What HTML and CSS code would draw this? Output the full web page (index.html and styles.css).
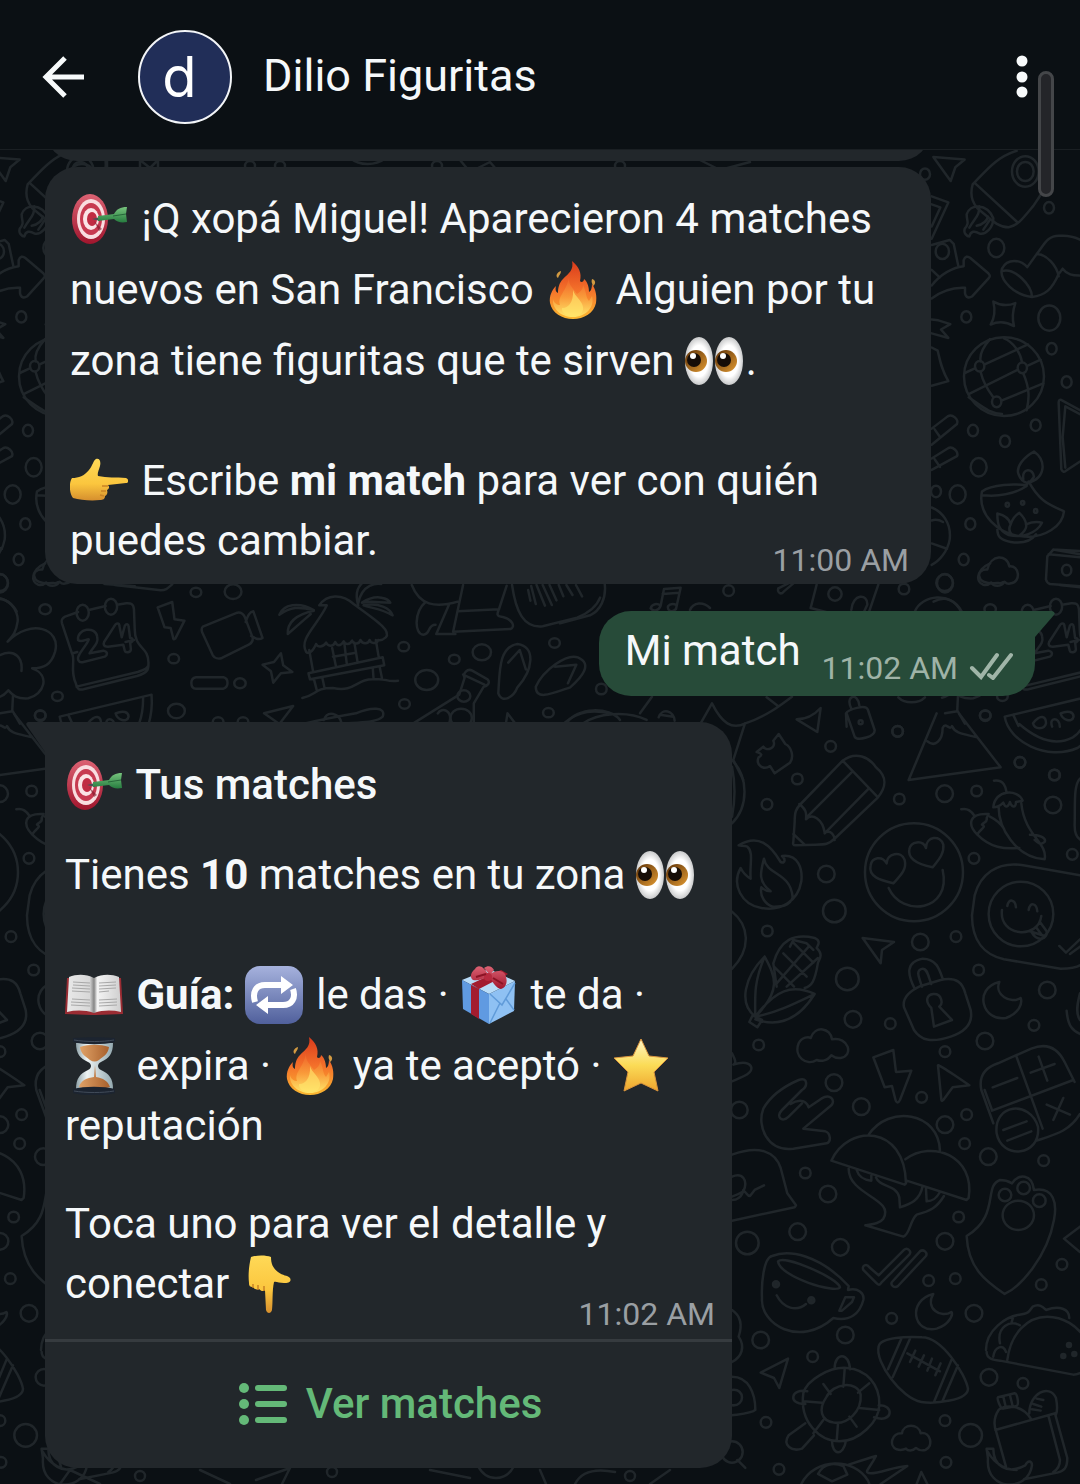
FILE: index.html
```html
<!DOCTYPE html>
<html lang="es">
<head>
    <meta charset="UTF-8">
    <meta name="viewport" content="width=device-width, initial-scale=1.0">
    <title>Dilio Figuritas</title>
    <link rel="stylesheet" href="styles.css">
</head>
<body>
    <!-- emoji shapes -->
    <svg class="defs" aria-hidden="true">
        <defs>
            <linearGradient id="gRed" x1="0" y1="0" x2="0" y2="1"><stop offset="0" stop-color="#dc6273"/><stop offset="1" stop-color="#a0152d"/></linearGradient>
            <linearGradient id="gGreen" x1="0" y1="0" x2="0" y2="1"><stop offset="0" stop-color="#77c47d"/><stop offset="1" stop-color="#277d40"/></linearGradient>
            <linearGradient id="gFire" x1="0" y1="0" x2="0" y2="1"><stop offset="0" stop-color="#d93a1c"/><stop offset=".5" stop-color="#f4712a"/><stop offset="1" stop-color="#fbb831"/></linearGradient>
            <linearGradient id="gFlame" x1="0" y1="0" x2="0" y2="1"><stop offset="0" stop-color="#ee5f28"/><stop offset=".5" stop-color="#f99a3a"/><stop offset="1" stop-color="#ffe76a"/></linearGradient>
            <linearGradient id="gHand" x1="0" y1="0" x2="0" y2="1"><stop offset="0" stop-color="#ffd957"/><stop offset=".6" stop-color="#fbc63e"/><stop offset="1" stop-color="#d68f2e"/></linearGradient>
            <radialGradient id="gEye"><stop offset=".65" stop-color="#fff"/><stop offset="1" stop-color="#c9cacb"/></radialGradient>
            <linearGradient id="gIris" x1="0" y1="0" x2="1" y2="1"><stop offset="0" stop-color="#5b3007"/><stop offset="1" stop-color="#e29a32"/></linearGradient>
            <linearGradient id="gPage" x1="0" y1="0" x2="1" y2="0"><stop offset="0" stop-color="#e8e8e8"/><stop offset=".42" stop-color="#d8d8d8"/><stop offset=".5" stop-color="#858585"/><stop offset=".56" stop-color="#f4f4f4"/><stop offset="1" stop-color="#cfcfcf"/></linearGradient>
            <linearGradient id="gBlue" x1="0" y1="0" x2="0" y2="1"><stop offset="0" stop-color="#a6b2dd"/><stop offset="1" stop-color="#50609c"/></linearGradient>
            <linearGradient id="gStar" x1="0" y1="0" x2="0" y2="1"><stop offset="0" stop-color="#fff5c6"/><stop offset=".5" stop-color="#fbdc57"/><stop offset="1" stop-color="#eea52e"/></linearGradient>
            <linearGradient id="gGlass" x1="0" y1="0" x2="1" y2="0"><stop offset="0" stop-color="#8fa2a8"/><stop offset=".3" stop-color="#eef4f4"/><stop offset="1" stop-color="#94a9b0"/></linearGradient>
            <linearGradient id="gSand" x1="0" y1="0" x2="1" y2="0"><stop offset="0" stop-color="#e0a267"/><stop offset="1" stop-color="#a8602c"/></linearGradient>
        </defs>
        <symbol id="target" viewBox="0 0 58 58">
            <ellipse cx="20" cy="29" rx="18" ry="25" fill="url(#gRed)"/>
            <ellipse cx="21" cy="29" rx="14" ry="20" fill="#f9dde0"/>
            <ellipse cx="21" cy="29" rx="11" ry="16" fill="#c73a50"/>
            <ellipse cx="21" cy="29" rx="8" ry="11" fill="#fbe4e6"/>
            <ellipse cx="22" cy="29" rx="5" ry="7" fill="#c02c43"/>
            <path d="M24 31l8 8-3 2z" fill="#7a1828" opacity=".6"/>
            <path d="M22 29l8-2v4z" fill="#4b5257"/>
            <path d="M28 26l16-2c3-5 6-7 13-7l-1 7 1 8c-6 1-10 0-13-3l-16 2z" fill="url(#gGreen)"/>
            <path d="M43 26l13-2" stroke="#26663a" stroke-width="1"/>
        </symbol>
        <symbol id="fire" viewBox="0 0 58 58">
            <path d="M17 10c-4 1-6 5-3 7 1-3 3-4 3-7zM48 18c4 1 4 5 1 7-1-3-2-4-1-7z" fill="#d29a42"/>
            <path d="M28 0c7 6 10 12 8 20 1 2 4 1 4-2 4 3 5 9 5 13 2-1 3-4 3-8 4 6 5 12 4 19-2 10-12 16-23 16S8 52 6 42c-1-7 2-13 6-17-1 4 0 6 2 7 0-5 1-10 5-14 6-6 11-9 9-18z" fill="url(#gFire)"/>
            <path d="M25 16c-1 8 4 11 8 17 4-3 6-5 6-9 4 8 2 11 6 16 1-2 2-3 3-5 3 11-6 21-19 21-12 0-21-8-20-18 1 4 4 6 7 6-3-9 7-14 9-28z" fill="url(#gFlame)"/>
            <path d="M29 29c2 7 9 10 10 17 1 6-4 9-10 9s-12-3-11-8c4 1 12-4 11-18z" fill="#ffe56c" opacity=".65"/>
        </symbol>
        <symbol id="eyes" viewBox="0 0 58 58">
            <ellipse cx="14" cy="29" rx="14" ry="24" fill="url(#gEye)"/>
            <ellipse cx="44" cy="29" rx="14" ry="24" fill="url(#gEye)"/>
            <circle cx="11" cy="29" r="11" fill="url(#gIris)"/>
            <circle cx="41" cy="29" r="11" fill="url(#gIris)"/>
            <circle cx="9" cy="28" r="7" fill="#160d08"/>
            <circle cx="39" cy="28" r="7" fill="#160d08"/>
            <circle cx="8" cy="24" r="3" fill="#fff"/>
            <circle cx="38" cy="24" r="3" fill="#fff"/>
        </symbol>
        <symbol id="point-right" viewBox="0 0 58 58">
            <path d="M2 26c7 0 12-2 17-8 4-5 4-9 7-11 4-1 5 3 4 7-1 4-3 7-2 10 9 2 18 1 28 2 3 1 3 5 0 5l-18 2c2 2 1 4-1 5 1 3 0 5-2 6 0 3-2 4-5 4-9 1-20 0-27-2-4-5-4-16-1-20z" fill="url(#gHand)"/>
            <path d="M38 34l-6 0M36 39l-5 0M34 44l-4-1" stroke="#c98325" stroke-width="1.5" fill="none"/>
        </symbol>
        <symbol id="point-down" viewBox="0 0 58 58">
            <path d="M11 2c6-2 15-2 20 0 0 7 2 11 7 15 5 4 9 3 12 6 2 4-2 5-6 5-5 0-8-2-10-1-2 9-1 20-2 28-1 4-5 4-6 0l-1-20c-2 2-4 1-6-1-3 1-5 0-6-2-3 0-4-1-4-4-1-9 0-17 2-26z" fill="url(#gHand)"/>
            <path d="M24 36l0-5M18 35v-5M13 33l0-4" stroke="#c98325" stroke-width="1.5" fill="none"/>
        </symbol>
        <symbol id="book" viewBox="0 0 58 58">
            <path d="M2 12h54l2 36-26 1H26L0 48z" fill="#9b2c33"/>
            <path d="M4 11c8-3 17-3 25 1 8-4 17-4 25-1l2 35c-9-2-18-2-27 1-9-3-18-3-27-1z" fill="url(#gPage)"/>
            <path d="M8 16l17 1M8 19l17 1M7 22l18 1M7 25l18 1M7 33l18 1M6 36l19 1M6 39l19 1M34 17l17-1M34 20l17-1M34 23l17-1M34 26l10-1M34 34l18-1M34 37l18-1M34 40l18-1" stroke="#a8a8a8" stroke-width="1"/>
        </symbol>
        <symbol id="repeat" viewBox="0 0 58 58">
            <rect width="58" height="58" rx="15" fill="url(#gBlue)"/>
            <path d="M10 36c-3-10 1-17 10-17h18M48 23c3 9-1 16-10 16H20" fill="none" stroke="#fff" stroke-width="6"/>
            <path d="M36 10l12 9-12 9zM23 30v18l-12-9z" fill="#fff"/>
        </symbol>
        <symbol id="gift" viewBox="0 0 58 58">
            <path d="M3 14l27-11 26 12-26 13z" fill="#b9dcf8"/>
            <path d="M3 14l27 14v30L4 43z" fill="#609ae1"/>
            <path d="M56 15L30 28v30l25-13z" fill="#8fc1f3"/>
            <path d="M12 19l8 4v30l-8-5zM12 18l30-14 7 4-29 15z" fill="#a31c2f"/>
            <path d="M31 28l12 11 13-22M31 57l10-20M47 33l8 11" fill="none" stroke="#609bd9" stroke-width="1.5"/>
            <path d="M30 10C25 0 19-2 16 3c-5 4-5 9-2 11 5 1 10-1 16-4zM30 9c7-6 16-5 17 2 2 6-1 11-5 12-5-1-9-7-12-14zM25 2c4-3 8-2 10 2l-4 5z" fill="url(#gRed)"/>
            <ellipse cx="29" cy="11" rx="4" ry="4" fill="#b72a3f"/>
            <path d="M17 11l10-3M34 12l10 6" stroke="#8b1325" stroke-width="2"/>
        </symbol>
        <symbol id="hourglass" viewBox="0 0 58 58">
            <path d="M11 6h37c0 11-4 15-12 19-4 2-4 6 0 8 8 4 12 8 12 19H11c0-11 4-15 12-19 4-2 4-6 0-8C15 21 11 17 11 6z" fill="url(#gGlass)"/>
            <path d="M15 10c9-3 20-3 29 0-1 7-5 9-10 13-3 2-6 2-9 0-5-4-9-6-10-13z" fill="url(#gSand)"/>
            <path d="M14 50c2-7 8-9 15-10l1-12 1 12c7 1 12 4 14 10-9 3-22 3-31 0z" fill="url(#gSand)"/>
            <path d="M8 1c12-1 31-1 42 0v4c-12 3-30 3-42 0zM8 52c12-3 30-3 42 0v4c-11 3-31 3-42 0z" fill="#1c2430"/>
            <path d="M9 3c12 2 29 2 40 0M9 54c12 2 29 2 40 0" stroke="#414b59" fill="none"/>
        </symbol>
        <symbol id="star" viewBox="0 0 58 58">
            <path d="M29 2l8 17 19 2-14 14 4 19-17-8-17 8 4-19L2 21l19-2z" fill="url(#gStar)" stroke="#d9943d" stroke-width="1" stroke-linejoin="round"/>
        </symbol>
    </svg>

    <header class="header">
        <button class="icon-button" aria-label="Volver">
            <svg width="44" height="44" viewBox="0 0 44 44" fill="none" stroke="#f7fafb" stroke-width="5">
                <path d="M23 3L4 22l19 19M4 22h38"/>
            </svg>
        </button>
        <div class="avatar">d</div>
        <h1>Dilio Figuritas</h1>
        <button class="icon-button menu" aria-label="Más opciones">
            <svg width="12" height="44" viewBox="0 0 12 44" fill="#f7fafb">
                <circle cx="6" cy="6" r="5.5"/><circle cx="6" cy="22" r="5.5"/><circle cx="6" cy="37" r="5.5"/>
            </svg>
        </button>
        <div class="scroll-thumb"></div>
    </header>

    <main class="chat">
        <svg class="wallpaper" viewBox="0 150 1080 1334" preserveAspectRatio="xMinYMin slice" aria-hidden="true">
            <g id="doodles">
                <!-- rocket, globe, lamp -->
                <g transform="translate(880 0) scale(.3333 .3827)">
                    <path d="M160 410l94 7-28 20-14 36z"/>
                    <path d="M410 394c-60 16-90 50-132 88-10 30 2 50 14 62 40 28 60 50 94 50 26-4 40-20 74-56 40-50 60-80 50-130M284 478l130 104"/>
                    <circle cx="436" cy="448" r="40"/><circle cx="436" cy="448" r="25"/>
                    <path d="M340 570c-20-40-70-38-80-10 0 20 10 20-6 38-4 12 8 20 14 20 4-14 16-16 30-8 20 4 42-16 42-40zM268 595c20-30 30-30 30-56M290 590c20-4 30-10 34-24M310 600l20-26"/>
                    <path d="M155 513l50 16-50 95M155 534l26 8-26 50M155 640l54-13 12 10 14 58M155 705l24 20"/>
                    <circle cx="187" cy="657" r="20"/>
                    <path d="M155 746c30-32 60-46 96-50v-16c4-10 12-12 20-6l54 40c6 6 6 8 0 14l-48 46c-10 6-20 4-22-8v-14c-40-2-70 8-100 28"/>
                    <path d="M470 664c20-20 30-50 70-48 30-2 60 8 80 20M470 664l-28 34c-20-20-60-24-76 4-10 30 40 70 90 74 40-4 60-20 80-60l12-14c14 16 30 18 50 18M366 708c40-10 90 40 90 68M470 664c30 0 60 30 66 58"/>
                    <path d="M340 788c20 10 44 12 66 4-8 20-10 40-4 60-20-10-44-14-70-4 14-20 14-38 8-60z"/>
                    <ellipse cx="372" cy="984" rx="120" ry="103"/>
                    <circle cx="299" cy="957" r="14"/><circle cx="427" cy="961" r="14"/><circle cx="350" cy="1050" r="14"/>
                    <path d="M330 886c-30 30-30 50-28 58M372 884c30 10 50 40 54 62M256 974l30-12M314 952l130-52M266 1030l148-64M442 956l40-16M302 972c8 30 24 50 38 66M430 976c20 40 18 66 10 96M366 1046l124-44M266 1038c50 30 60 40 100 44"/>
                    <path d="M155 835l20 2 36 10-28 14 22 22-50-12M155 908l18 8c8 30 12 50 32 80l-50 12"/>
                    <path d="M155 1120l48-32c14-8 34 8 28 20l-76 54M180 1142l-16-20M155 1198l48-26c14-8 34 8 28 20l-76 36M180 1220l-16-20"/>
                    <path d="M600 1072l-54-26c-6-4-10 0-10 6l8 174c4 8 10 8 14 4l42-24M600 1082l-44-20-8 80 8 80"/>
                    <path d="M462 1180c-30 14-56 40-46 60 6 14 16 20 26 22 20-4 44-14 46-42 0-20-10-30-26-40zM430 1252c-6-30 30-30 32-6l-14 16M306 1284c30-20 100-20 134-16l6-10c30 50 60 60 106 78-4 40-60 70-120 66-80-4-140-60-126-118zM306 1294c50 4 100-4 134-24M352 1382c0 20 10 30 40 34 30 4 60 0 76-20M352 1342c20 4 36 14 40 28 6-16 18-26 26-30 12 10 20 20 20 30 12-4 30-8 48-4-16 28-60 40-100 32-30-10-34-30-34-56zM392 1370c-6 10-6 20 6 28M438 1370c4 10-6 20-20 30"/>
                    <circle cx="382" cy="1319" r="5"/><circle cx="428" cy="1314" r="5"/><circle cx="467" cy="1335" r="5"/>
                    <path d="M155 1326c30 10 60 40 54 84-6 30-30 56-54 66M155 1360c14-4 26 0 34 4M155 1420l46 14"/>
                    <path d="M310 1528c-24-6-20-42 12-40 10-40 60-40 66-8 30-4 36 40 6 44-10 4-16 0-20-4-14 16-34 12-40 2-8 6-16 8-24 6z"/>
                    <path d="M600 1440l-80-4-18 18-4 60c2 8 6 10 12 12l90 6M520 1436l80 12M506 1448l94 8"/>
                    <circle cx="560" cy="1490" r="14"/><circle cx="135" cy="455" r="15"/><circle cx="507" cy="543" r="15"/><circle cx="349" cy="648" r="24"/><circle cx="259" cy="828" r="15"/><circle cx="508" cy="831" r="33"/><circle cx="515" cy="911" r="15"/><circle cx="560" cy="998" r="15"/><circle cx="467" cy="1111" r="15"/><circle cx="279" cy="1125" r="15"/><circle cx="375" cy="1153" r="15"/><circle cx="296" cy="1221" r="24"/><circle cx="233" cy="1292" r="24"/><circle cx="168" cy="1284" r="15"/><circle cx="271" cy="1369" r="15"/><circle cx="251" cy="1462" r="15"/><circle cx="195" cy="1524" r="24"/>
                </g>
                <!-- strip around the outgoing bubble -->
                <g transform="translate(560 580) scale(.3333)">
                    <path d="M272 85c4-14 20-16 30-8l10-50 50-4-14 64c-14 14-26 4-24-8 6-8 16-8 26-4M302 77c-6 14-20 20-30 8M308 42l50-4M0 130l90-24c30-14 50-50 44-96M655 25l40-20M655 25c-4 14 8 20 16 10l40-34M770 14l-18 70 60 16M955 14l-34 100M874 90c4-50 50-50 48-16l-14 30M1065 94c20-50 110-60 140 0M390 90c10-24 40-26 60-6"/>
                    <path d="M422 430l34-60c30 60 60 80 100 60 60-20 100-50 140-80M555 430l-35 110 30 60M620 352l34 26M860 440l-2-40c6-10 60-30 66-10l20 60c2 20-50 34-60 20l-24-70M874 386c-20-40 20-50 24-10"/>
                    <circle cx="902" cy="427" r="6"/>
                    <path d="M710 418c30 0 50-10 72-34l-10 72zM1015 352c20 20 60 20 80 0"/>
                    <path d="M20 430c30-50 130-50 160-10M70 430c40-30 130-40 190-10M296 412c10-30 46-20 48 10M300 404l40 6M240 400l36-50"/>
                    <circle cx="124" cy="327" r="16"/><circle cx="506" cy="32" r="16"/><circle cx="825" cy="42" r="20"/><circle cx="1032" cy="27" r="16"/><circle cx="1154" cy="8" r="25"/><circle cx="1013" cy="454" r="16"/><circle cx="1276" cy="407" r="16"/><circle cx="1380" cy="547" r="16"/><circle cx="1484" cy="585" r="16"/>
                </g>
                <!-- pencil, smiley, padlock -->
                <g transform="translate(720 720) scale(.3333)">
                    <path d="M110 96l20-16c10 16 40 4 30-18l16-20 20 30c20 10 26 40 14 56l-46 32-14-22c-20 14-44-4-34-26 14-8 8-10-6-16z"/>
                    <path d="M650-20l-84 200 276-38L718-18M622 64c24 20 46-4 46-40 10-20 20 10 28-6 10 24 36 24 76 34"/>
                    <path d="M368 122c40-30 80-10 100 20 36 30 30 60 6 90L346 354c-20 20-30 20-60 20l-60 2c-6 0-8-4-6-10l4-60c0-30 4-40 18-54zM368 122l106 110M394 158L262 290M446 206L314 340M238 252c20 16 22 26 20 46 20-20 50 0 56 40 20-10 30 10 30 22M220 342l34 32"/>
                    <path d="M56 376c60-36 96 0 126 50 16 6 14-10 4-18 50-6 62 40 58 76-10 60-60 90-120 80-60-10-90-70-62-120 6 12 16 24 30 32-4-40 10-80-10-96-10-4-20-2-26-4zM132 416c8 50 80 40 86 116-10 30-40 28-60 28-20-6-40-30-34-58 8 8 16 12 28 12-40-30-30-60-20-98z"/>
                    <circle cx="582" cy="457" r="147"/>
                    <path d="M520 490c-40-10-76-20-68-54 4-24 34-30 48-6 0-30 44-40 54-10 8 30-16 50-34 70zM638 442c-40-8-76-24-70-54 4-24 40-30 50-4 0-36 44-40 52-10 4 30-20 52-32 68zM506 504c40 90 190 70 162-54"/>
                    <path d="M822 182c30-4 36 20 38 36M820 262c4-54 74-56 88-20l-20 4c0 20-14 16-18 0-8 20-14 16-20 2-10 10-20 14-30 14M836 262c0 60 50 150 138 156 10-50-60-70-70-168M930 344c30 0 50 10 44 22-10 10-20 4-30-6M724 268c20-4 30 6 40 20M772 344c-30-30-26-66 34-62l-6 12c4 14-10 12-14 20 16 8-8 14-14 30zM810 290c20 10 34 24 42 36M772 344c40 40 80 44 126 40"/>
                    <path d="M1080 466l-170-30c-80-14-130 30-146 90l-8 60c0 80 40 120 96 132l170 28c30 0 50-4 58-10"/>
                    <circle cx="903" cy="582" r="97"/>
                    <path d="M862 558c4-24 24-20 26 4M926 570c4-26 24-20 26 4M846 570c-10 80 110 90 118 18M930 634l44 14M934 636c20 34 50 20 46-2l-20-28M950 624l16 22M1018 678l20 20 42-40M1050 702l30-22"/>
                    <path d="M134 710c-60 60-80 140-28 180 80-80 60-120 28-180zM134 710c-30 70-30 110-28 180M106 890c60-80 110-100 178-68-50 80-110 100-178 76M106 890c60-10 120-40 178-68M98 886l28 14-14 22-24-16zM160 730c20-70 60-90 124-76 20 10 10 20 6 30 20 20 10 30 4 44-10 60-20 70-40 76M170 790l96-110M200 800l94-86M162 740l60 60M190 700l70 70M220 668l60 60M210 680l10-20 40 10 20 20M160 730l10 70"/>
                    <path d="M428 654l94 12-36 24-4 40zM460 1012l60-22 8 66 46-4-34 88c-6 12-12 8-14-2l-10-40-22 4zM654 1036c2-4 94 60 94 60l-50 6-28 38c-4 4-6 4-6-2z"/>
                    <path d="M552 862c-6-30 20-50 50-64l60-18c50-10 66 10 74 40l16 50c10 50-30 70-60 80-60 20-90 10-110-20zM584 806c-20-40-30-80 24-90 40 0 50 30 60 60M606 800c-10-30-20-50 2-54 14 0 16 20 26 46M634 864c-20-20-14-40 6-42 26-2 30 30 18 38l38 40-54 20z"/>
                    <path d="M838 786c-80 20-50 120 20 108 40-14 50-44 44-60-30 20-80-10-64-48zM236 970c10-20 30-20 36-16 14-40 60-30 64 4 50-10 66 50 26 56-14 2-20-2-28-8-14 20-34 18-44 14-30 20-70-10-54-50z"/>
                    <path d="M36 1000c10 20 14 30 4 34 30-10 50-6 54 8 4 20-30 30-58 42"/>
                    <path d="M784 1110c-10-50 20-70 50-80l100-44c50-20 80 0 100 40l30 60M784 1110l36 100M888 1006l80 220M816 1172l244-92M932 1058l72-26M956 1010l26 72M818 1102l74-28M980 1154l70 30M1030 1134l-30 66"/>
                    <path d="M1080 176c-20 20-14 80-16 140 0 20 6 36 16 42M1040 872c4 50 20 60 40 70M1080 820c-8 30-14 60 0 80"/>
                    <circle cx="533" cy="34" r="16"/><circle cx="332" cy="79" r="16"/><circle cx="232" cy="177" r="16"/><circle cx="141" cy="253" r="16"/><circle cx="538" cy="237" r="16"/><circle cx="770" cy="213" r="16"/><circle cx="900" cy="127" r="16"/><circle cx="1003" cy="165" r="16"/><circle cx="762" cy="415" r="16"/><circle cx="1057" cy="403" r="16"/><circle cx="142" cy="633" r="16"/><circle cx="708" cy="650" r="16"/><circle cx="776" cy="750" r="16"/><circle cx="511" cy="911" r="16"/><circle cx="116" cy="975" r="16"/><circle cx="675" cy="995" r="16"/><circle cx="942" cy="916" r="16"/><circle cx="605" cy="1132" r="16"/><circle cx="740" cy="1184" r="16"/>
                    <circle cx="674" cy="221" r="25"/><circle cx="999" cy="255" r="25"/><circle cx="319" cy="462" r="25"/><circle cx="601" cy="666" r="25"/><circle cx="982" cy="810" r="25"/><circle cx="399" cy="898" r="25"/><circle cx="795" cy="963" r="25"/><circle cx="342" cy="1088" r="25"/><circle cx="424" cy="1160" r="25"/><circle cx="58" cy="1170" r="25"/><circle cx="343" cy="573" r="34"/><circle cx="382" cy="777" r="34"/>
                    <path d="M36 120c50 50 50 140 0 190M36 140c10 50 10 100 0 150M36 575c50 40 60 110 0 172"/>
                </g>
                <!-- mushrooms, cup, turtle -->
                <g transform="translate(720 1100) scale(.3333)">
                    <path d="M236-60c30-10 26 20 10 30l-60 60c-20 20 0 40 20 20l40-40M236-60c-46 20-86 50-106 86-20 50 10 130 90 120l100-16c16-6 10-32-4-36l-66-8 84-70c14-16-4-36-30-20l-38 26c-10-30-40-20-54-10"/>
                    <path d="M334 182c50-110 220-110 224 68l-4 4zM446 104c60-90 210-70 214 48M556 178c80-60 210-10 190 116l-6 6-180-58M386 206c0 80 140 90 104 150-10 14-30 16-54 20l114 34c20-6 20-50 40-66 40-10 60-20 82-56M410 210c6 20 20 30 44 32v-16M468 232c10 30 60 20 70 60l2 30c30-10 60-20 68-64M618 266l2 38c20 0 30-10 40-28"/>
                    <path d="M36 164c80-30 130-10 146 40l20 76 26 36-4 6-188 40M36 230c30-14 50 10 34 44 10 0 10 14 20 14l14-18 28-14M36 290c30-10 40-20 34-20M36 300c14 0 30-8 34-30"/>
                    <path d="M740 408c100-60 50-150 100-168 20 0 26 4 36 10 20-30 60-30 66 20 60-10 70 40 60 90-20 110-100 200-148 222-60-40-110-80-114-174z"/>
                    <circle cx="855" cy="285" r="19"/><circle cx="911" cy="264" r="19"/><circle cx="958" cy="302" r="19"/><ellipse cx="895" cy="346" rx="47" ry="44"/>
                    <path d="M156 468c50-20 140-6 230 90l-2 12c30-8 50 10 46 30-10 40-40 66-90 54-100 90-220 20-214-60-2-40 4-120 30-126zM174 484c20-20 180 50 186 78-10 20-180-30-186-78zM376 592h26l-6 14-30 26h-8zM170 586c20 40 60 50 88 26"/>
                    <circle class="solid" cx="168" cy="553" r="9"/><circle class="solid" cx="274" cy="601" r="9"/>
                    <path d="M430 510c-6-14 10-20 18-8l28 24 76-76c10-10 24 4 16 14l-84 84c-6 8-8 8-16 0zM516 546l84-92c10-8 24 4 18 14l-84 90c-10 8-24-2-18-12z"/>
                    <path d="M640 582c-80 20-60 120 10 104 40-12 50-44 44-50-30 20-80-10-54-54z"/>
                    <path d="M476 740c4-30 90-30 130-28 60 0 130 110 138 154 0 36-100 46-140 40-60-10-140-120-128-166zM544 716l-40 92M572 712l-54 120M696 776l-54 130M714 796l-46 106M562 760l98 54M586 752l-16 34M612 766l-16 34M636 776l-14 36M662 790l-16 36"/>
                    <path d="M798 750c0-60 60-100 100-106 30-4 30-10 40-24 20-10 30 0 40 10 40-14 70-4 70 24M800 756c0 20 20 24 40 26l220 42c10 0 20-4 30-10M862 780c10-80 60-130 120-130 50 0 90 30 110 60M880 650l-6 20M840 730c-10-50 30-70 60-54M820 770c4-30 30-40 38-14"/>
                    <circle class="solid" cx="1047" cy="735" r="6"/><circle class="solid" cx="1030" cy="768" r="6"/><circle class="solid" cx="1063" cy="762" r="6"/>
                    <path d="M250 880c10-40 80-80 130-76 60 4 100 50 98 110 0 50-60 110-120 110-60 0-120-60-108-144zM320 890c20-40 90-50 102-6 4 50-40 90-80 84-40-6-48-40-22-78zM310 852l22 30M374 808l-4 52M448 850l-34 28M478 930l-60-6M410 980l-22-30M350 1024l4-54M280 1000l30-40M250 904l56 4M344 806c0-50 44-50 46 2M262 874c-50-10-60 40-6 38M256 970l-50 36c-20 30 10 50 40 40l36-40M336 1022c0 44 34 48 42 0M462 952c60 20 60-40 14-36"/>
                    <path d="M204 776l-26 88-16-30-40-16zM530 1048c-24-10-16-50 16-48 4-30 50-30 56 0 30-6 40 40 14 50-14 4-20 0-28-6-10 10-24 10-30 2-8 4-14 6-28 2z"/>
                    <path d="M834 892l50-12c8 0 14 34 6 38l-40 8c-8 2-20-30-16-34zM850 890l8 34M870 886l8 32M836 930c-20 30-10 60-6 70l28 100M838 928c20-14 70-14 96 30M826 990l180-50M928 940c0-60 60-90 80-46 4 20 4 40 0 50M950 896l20 4M940 912l24 8M936 928l26 4M986 950l34 130c0 20-10 30-20 36M1006 944l36 130c0 30-10 40-30 44l-100 20M800 1046h20c0 50 40 80 96 50 10-20 20-10 20 0-10 80-140 80-132-20zM800 1050c10 20 40 60 90 60"/>
                    <path d="M244 1152c40-80 160-80 200-10l4 10M294 1122c20-40 60-30 76-24l12 26-46 20zM386 1094c30-10 60-20 82-26-20 40-40 50-16 52 30 0 70-20 110-22l-80 54M590 1152l14-36 18 36"/>
                    <path d="M36 830c50 0 70 50 70 100-10 10-40 12-70 16M36 870c40-6 40 50 0 46M36 630c30 20 30 50 20 80 20 30 10 60-20 76M52 1080l24 24"/>
                    <circle cx="36" cy="1056" r="32"/>
                    <path d="M816 30l-22-60M830 100c-10-90 100-100 124-20 10 90-110 100-124 20M850 90l70-26M862 122l72-28M950 122c60-20 100-30 130-80M1080 380l-48 36 48 40"/>
                    <circle cx="256" cy="219" r="16"/><circle cx="734" cy="131" r="16"/><circle cx="971" cy="182" r="16"/><circle cx="716" cy="351" r="16"/><circle cx="1026" cy="493" r="16"/><circle cx="964" cy="554" r="16"/><circle cx="626" cy="542" r="16"/><circle cx="706" cy="536" r="16"/><circle cx="515" cy="655" r="16"/><circle cx="278" cy="770" r="16"/><circle cx="138" cy="967" r="16"/><circle cx="177" cy="1108" r="16"/><circle cx="675" cy="962" r="16"/><circle cx="678" cy="1087" r="16"/><circle cx="909" cy="850" r="16"/>
                    <circle cx="675" cy="74" r="25"/><circle cx="805" cy="170" r="25"/><circle cx="324" cy="282" r="25"/><circle cx="233" cy="395" r="25"/><circle cx="361" cy="442" r="25"/><circle cx="675" cy="424" r="25"/><circle cx="762" cy="640" r="25"/><circle cx="376" cy="705" r="25"/><circle cx="122" cy="720" r="25"/><circle cx="807" cy="832" r="25"/><circle cx="82" cy="429" r="34"/><circle cx="752" cy="1006" r="34"/>
                </g>
            </g>
            <use href="#doodles" x="-945"/>
            <!-- tree, calendar, beach hut, watermelon -->
            <g id="strip" transform="translate(0 560) scale(.3827 .3333)">
                <path d="M-30 125c50-30 80 30 76 60-4 30-10 40-26 60 60-70 140-40 124 30-10 40-30 50-60 50 50 20 30 80-10 90-30 2-40-8-52-24-12 16-20 20-30 22M0 285c40-20 60 10 56 48M34 405l-2 46 20 40M0 460l32-6"/>
                <path d="M204 156l-34 14c-10 6-10 12-8 20l26 90c10 20-6 50 10 90 4 20 10 20 20 18l140-40c30-10 30-20 30-40 0-50-36-40-36-100l-2-60c-2-20-10-18-20-18l-24 4M232 150l44-12M190 280l12-4M350 240l-22 6M200 380l160-44c20-8 24-10 28-20"/>
                <ellipse cx="216" cy="158" rx="16" ry="24"/><ellipse cx="290" cy="140" rx="16" ry="24"/>
                <path d="M204 240c-4-34 46-44 50-10 4 20-10 30-20 50l36-8c14 4 10 14 4 18l-56 16c-14 4-18-10-10-24 10-20 20-30 24-44-8 0-20 10-28 2zM298 200c6-14 14-10 14-2l6 34 8-34c4-8 10-6 10 2l4 34c8 0 10 10 0 14l2 20c0 10-14 12-16 4l-4-18-40 6c-12 0-12-8-10-14z"/>
                <path d="M412 142l38-16 6 52 26 4-24 54c-4 4-6 2-6-4l-6-28-16-2zM530 200l90-42c10-2 16 4 20 14l20 60c2 10-4 18-10 22l-70 40c-10 4-20 0-24-8l-28-70c-2-8 0-14 2-16zM642 186c6-20 10-30 20-32l24 80c-10 8-20 0-30-6"/>
                <path d="M734 280l6 36 24 20-30 4-20 28-6-34-22-20 30-8zM730 164c10-30 50-40 90-14-40-10-60-10-90 14zM820 152c-40 10-70 30-68 70 30-30 40-40 60-60M834 136c20-34 60-36 90-4 60 50 100 80 84 100-8 8-14 10-20 8-4 14-20 10-22 0-4 14-20 12-24 0-4 14-18 14-22 2-6 14-18 12-22 2-8 16-18 14-22 2-6 16-18 14-24 2-10 16-22 14-26 4-10 26-20 30-26 24-20-40 30-80 54-140zM806 340l194-48 4 24-194 42zM808 270l10 64M868 264l10 56M900 252l6 58M926 248l8 56M982 240l8 54M870 290l60-12M820 356l8 36M842 352l6 32M974 324l2 30M992 320l6 34M790 414c40-10 30-30 80-30 60 14 60-30 110-26 30-4 30 10 60 4M936 136c-10-40 0-60 20-76M936 130c10-60 50-60 60-58M946 128c40-30 70-10 74 0-30 0-50-6-74 0zM950 136c40-10 70 10 76 30-30-20-50-20-76-30z"/>
                <path d="M1076 75c20 60 60 70 120 50M1210 75l-26 140 150-8c14-6 4-30-20-36-20-2-14-12-10-24l20-70M1140 222h50M1140 222l34-90M1196 154l108-6M1112 126c-30 30-30 96-6 98 20 0 10-30 32-30M1338 75c10 80 30 130 80 124l90-26c30-14 50-30 60-60M1380 90l6 32M1388 78l12 54M1402 75l22 62M1418 75l24 60M1436 75l18 46M1460 75l12 34M1480 75l16 30M1505 75l16 34"/>
                <path d="M1302 400c4-60 0-140 50-148 50 8 40 80 0 130-10 30-40 50-50 18zM1328 308l30-38 16 58M1400 380c20-50 80-100 110-88 40 20 10 60-20 90-50 20-90 40-90-2zM1450 320l56-6-22 56M1080 490l120-86 14-50c-6-14 8-30 20-22l40 26c8 10 0 20-10 22l-26 50v60M1210 344l56 30M1144 460c10-20 40-10 30 30"/>
                <circle cx="1212" cy="408" r="17"/><circle cx="1205" cy="474" r="28"/>
                <path d="M156 470l240-66c4 60-10 130-50 160-80 40-180-20-190-94zM178 464l14 34M374 412c0 50-10 100-40 120-50 30-100 0-140-40"/>
                <path d="M230 490c20-30 34-20 34 0-4 20-30 20-34 0zM302 460c20-10 34-4 34 10-4 20-30 10-34-10zM280 500c-10-30 20-30 20 0M690 460l76-22-36 54zM800 490c50-14 80-20 130-30 40-20 80-20 70 10-20 20-60 16-90 20M846 480c10-30 40-20 46 8M500 368c0-10 4-14 12-16h72c14 4 14 28 0 34h-72c-8 0-12-8-12-18zM1322 490l4-30 20 30M1474 490c40-40 80-40 120-30M300 75l120 16c14 0 18-6 30-18M118 10c-40 20-40 60 10 60 14-4 14 4 24-4"/>
                <circle cx="118" cy="148" r="15"/><circle cx="512" cy="97" r="14"/><circle cx="609" cy="95" r="22"/><circle cx="454" cy="296" r="14"/><circle cx="627" cy="370" r="15"/><circle cx="461" cy="453" r="22"/><circle cx="150" cy="409" r="14"/><circle cx="105" cy="466" r="14"/><circle cx="1055" cy="260" r="14"/><circle cx="1187" cy="298" r="14"/><circle cx="1259" cy="277" r="24"/><circle cx="1115" cy="360" r="30"/><circle cx="1057" cy="432" r="14"/><circle cx="1449" cy="249" r="14"/><circle cx="1433" cy="458" r="14"/><circle cx="570" cy="486" r="14"/><circle cx="635" cy="486" r="14"/>
            </g>
            <use href="#strip" x="945"/>
            <!-- slivers above the first bubble and under the last one -->
            <path d="M70 172a13 13 0 0 1 24 0M107 160v8M140 170v-10l10 8 8-8v10M350 158c10 8 25 8 36 0M460 160l10 12 20-10 12 14M700 160l20 10 30-8"/>
            <circle cx="250" cy="166" r="5"/><circle cx="280" cy="166" r="5"/><circle cx="437" cy="166" r="5"/><circle cx="620" cy="166" r="5"/>
            <path d="M60 1484l10-14 30 14M200 1470l30 14M256 1480l34-12-8 16M430 1470l40 8M478 1466c8 16 28 16 36 0M540 1470l6 14M575 1484c6-12 20-16 40-12M650 1484l20-14"/>
            <circle cx="332" cy="1472" r="5"/><circle cx="140" cy="1476" r="5"/><circle cx="630" cy="1476" r="5"/>
        </svg>

        <div class="bubble previous"></div>

        <article class="bubble wide">
            <p>
                <svg class="emoji" role="img" aria-label="diana"><use href="#target"/></svg> ¡Q xopá Miguel! Aparecieron 4 matches<br>
                nuevos en San Francisco <svg class="emoji tall" role="img" aria-label="fuego"><use href="#fire"/></svg> Alguien por tu<br>
                zona tiene figuritas que te sirven <svg class="emoji tall" role="img" aria-label="ojos"><use href="#eyes"/></svg>.
            </p>
            <p>
                <svg class="emoji" role="img" aria-label="mano a la derecha"><use href="#point-right"/></svg> Escribe <b>mi match</b> para ver con quién<br>
                puedes cambiar.
            </p>
            <time class="time">11:00 AM</time>
        </article>

        <article class="bubble outgoing">
            <p>Mi match</p>
            <time class="time">11:02 AM</time>
            <svg class="checks" width="44" height="28" viewBox="0 0 44 28" fill="none" stroke="#a0b5a8" stroke-width="4" stroke-linecap="round">
                <path d="M3 16l9 9L28 3M20 23l4 3L42 3"/>
            </svg>
            <svg class="tail" width="20" height="26" viewBox="0 0 20 26" aria-hidden="true"><path d="M0 0h17q4 1 2 4L0 26z" fill="#274b39"/></svg>
        </article>

        <article class="bubble list">
            <svg class="tail" width="20" height="30" viewBox="0 0 20 30" aria-hidden="true"><path d="M20 0H3Q0 1 2 4l18 26z" fill="#22272b"/></svg>
            <div class="list-text">
                <h2><svg class="emoji" role="img" aria-label="diana"><use href="#target"/></svg> Tus matches</h2>
                <p>Tienes <b>10</b> matches en tu zona <svg class="emoji" role="img" aria-label="ojos"><use href="#eyes"/></svg></p>
                <p class="guide">
                    <svg class="emoji" role="img" aria-label="libro"><use href="#book"/></svg> <b>Guía:</b> <svg class="emoji" role="img" aria-label="repetir"><use href="#repeat"/></svg> le das · <svg class="emoji" role="img" aria-label="regalo"><use href="#gift"/></svg> te da ·<br>
                    <svg class="emoji tall" role="img" aria-label="reloj de arena"><use href="#hourglass"/></svg> expira · <svg class="emoji" role="img" aria-label="fuego"><use href="#fire"/></svg> ya te aceptó · <svg class="emoji" role="img" aria-label="estrella"><use href="#star"/></svg><br>
                    reputación
                </p>
                <p class="hint">
                    Toca uno para ver el detalle y<br>
                    conectar <svg class="emoji" role="img" aria-label="mano hacia abajo"><use href="#point-down"/></svg>
                </p>
                <time class="time">11:02 AM</time>
            </div>
            <button class="list-button">
                <svg width="48" height="42" viewBox="0 0 48 42" fill="#64b978">
                    <circle cx="5" cy="5" r="5"/><circle cx="5" cy="21" r="5"/><circle cx="5" cy="37" r="5"/>
                    <rect x="16" y="2" width="32" height="6" rx="3"/><rect x="16" y="18" width="32" height="6" rx="3"/><rect x="16" y="34" width="32" height="6" rx="3"/>
                </svg>
                Ver matches
            </button>
        </article>
    </main>
</body>
</html>
```
FILE: styles.css
```css
* {
    box-sizing: border-box;
}
body {
    display: flex;
    flex-direction: column;
    min-height: 100vh;
    margin: 0;
    background-color: #0b1014;
    color: #f5f8fa;
    font-family: Roboto, "Liberation Sans", sans-serif;
    font-size: 42px;
    line-height: 60px;
}
h1, h2, p {
    margin: 0;
}
button {
    border: none;
    background: none;
    padding: 0;
    font: inherit;
    cursor: pointer;
}
.defs {
    position: absolute;
    width: 0;
    height: 0;
}

/* header */
.header {
    position: relative;
    z-index: 2;
    display: flex;
    align-items: center;
    height: 150px;
    padding: 4px 52px 0 42px;
    border-bottom: 1px solid #1a1f23;
}
.icon-button {
    display: flex;
}
.avatar {
    width: 94px;
    height: 94px;
    margin-left: 52px;
    padding-right: 11px;
    border: 2px solid #f3f5f8;
    border-radius: 50%;
    background-color: #212e58;
    color: #fff;
    font-family: Inter, sans-serif;
    font-size: 56px;
    line-height: 90px;
    text-align: center;
}
.header h1 {
    flex: 1;
    margin-left: 31px;
    padding-bottom: 2px;
    font-size: 45px;
    font-weight: 400;
}
.scroll-thumb {
    position: absolute;
    top: 71px;
    right: 26px;
    width: 16px;
    height: 126px;
    border: 3px solid #444649;
    border-radius: 8px;
    background-color: #242529;
}

/* conversation */
.chat {
    position: relative;
    flex: 1;
    display: flex;
    flex-direction: column;
    align-items: flex-start;
    padding: 0 45px 16px;
    overflow: hidden;
}
.wallpaper {
    position: absolute;
    top: 0;
    left: 0;
    width: 100%;
    height: 100%;
    fill: none;
    stroke: #20262a;
    stroke-width: 2.5;
    stroke-linecap: round;
    stroke-linejoin: round;
}
.wallpaper path,
.wallpaper circle,
.wallpaper ellipse {
    vector-effect: non-scaling-stroke;
}
.wallpaper .solid {
    fill: #20262a;
}
.bubble {
    position: relative;
    border-radius: 32px;
    background-color: #22272b;
}
.previous {
    width: 100%;
    max-width: 886px;
    height: 80px;
    margin: -69px 0 6px;
}
.wide {
    width: 100%;
    max-width: 886px;
    padding: 22px 22px 6px 25px;
}
.wide p + p {
    margin-top: 60px;
}
.emoji {
    width: 58px;
    height: 58px;
    margin-right: 3px;
    vertical-align: -15px;
}
.emoji.tall {
    margin-top: 12px;
}
b {
    font-weight: 700;
}
.time {
    display: block;
    color: #9a9fa3;
    font-size: 32px;
    line-height: 36px;
    text-align: right;
}
.wide .time {
    margin-top: -29px;
}
.tail {
    position: absolute;
    top: 0;
}
.outgoing {
    display: flex;
    align-items: flex-end;
    align-self: flex-end;
    margin: 27px 0 26px;
    padding: 10px 22px 10px 26px;
    border-top-right-radius: 0;
    background-color: #274b39;
}
.outgoing p {
    padding-bottom: 5px;
}
.outgoing .time {
    margin-left: 21px;
    color: #9fb3a7;
}
.outgoing .tail {
    left: 100%;
}
.checks {
    margin: 0 0 6px 11px;
}
.list {
    width: 100%;
    max-width: 687px;
    border-top-left-radius: 0;
}
.list .tail {
    right: 100%;
}
.list-text {
    padding: 33px 17px 7px 20px;
}
.list h2 {
    margin-bottom: 30px;
    font-size: 42px;
    font-weight: 500;
}
.guide {
    margin-top: 60px;
}
.hint {
    margin-top: 38px;
}
.list .time {
    margin-top: -18px;
}
.list-button {
    display: flex;
    align-items: center;
    justify-content: center;
    gap: 19px;
    width: 100%;
    height: 129px;
    padding: 0 0 3px 4px;
    border-top: 3px solid #363b3f;
    color: #64b978;
    font-weight: 500;
}
```
